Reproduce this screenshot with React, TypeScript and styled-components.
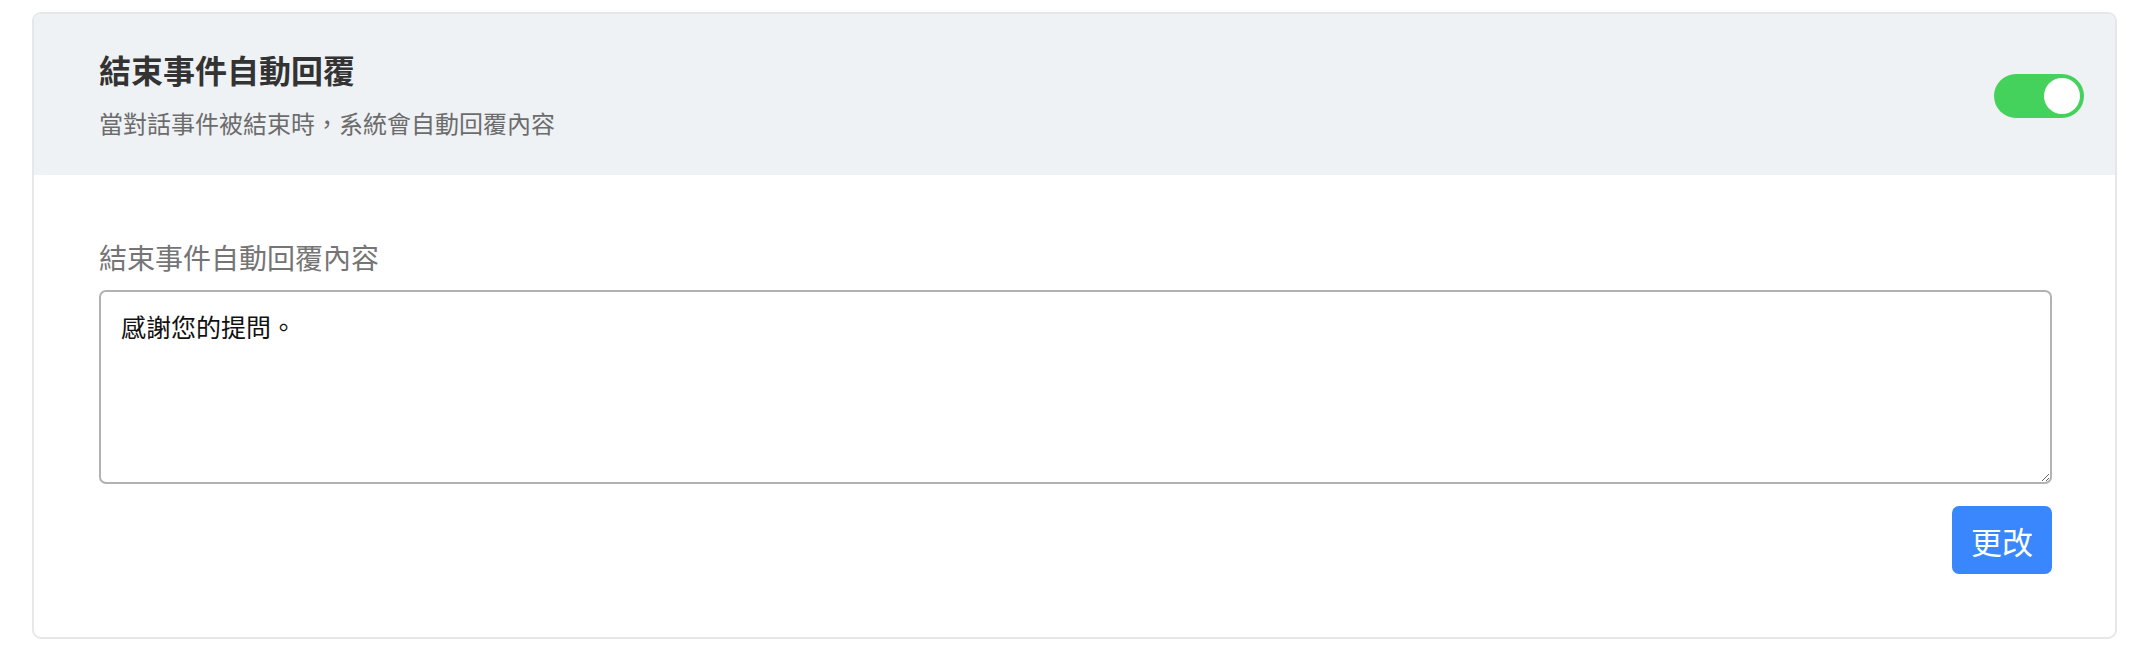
import React, { useState } from "react";
import styled, { createGlobalStyle } from "styled-components";

const GlobalStyle = createGlobalStyle`
  html, body {
    margin: 0;
    padding: 0;
    background: #ffffff;
    font-family: "Noto Sans CJK TC", "Noto Sans", sans-serif;
  }
  * { box-sizing: border-box; }
`;

const Page = styled.div`
  padding: 12px 33px 19px 32px;
`;

const Card = styled.section`
  border: 2px solid #e6e7e9;
  border-radius: 9px;
  overflow: hidden;
  background: #ffffff;
`;

const Header = styled.header`
  display: flex;
  align-items: center;
  justify-content: space-between;
  background: #eff2f5;
  padding: 36px 31px 34px 65px;
`;

const HeaderText = styled.div`
  display: flex;
  flex-direction: column;
  gap: 16px;
`;

const Title = styled.h2`
  margin: 0;
  font-size: 32px;
  line-height: 39px;
  font-weight: 700;
  color: #333333;
`;

const Subtitle = styled.p`
  margin: 0;
  font-size: 24px;
  line-height: 36px;
  color: #6c6c6c;
`;

const Switch = styled.button<{ $on: boolean }>`
  display: flex;
  align-items: center;
  justify-content: ${(p) => (p.$on ? "flex-end" : "flex-start")};
  width: 90px;
  height: 44px;
  padding: 4px;
  border: none;
  border-radius: 22px;
  background: ${(p) => (p.$on ? "#44d15c" : "#d0d4d9")};
  cursor: pointer;
`;

const Knob = styled.span`
  display: block;
  width: 36px;
  height: 36px;
  border-radius: 50%;
  background: #ffffff;
`;

const Body = styled.div`
  display: flex;
  flex-direction: column;
  padding: 62px 63px 63px 65px;
`;

const Label = styled.label`
  font-size: 28px;
  line-height: 40px;
  color: #757575;
  margin-bottom: 13px;
`;

const TextArea = styled.textarea`
  display: block;
  width: 100%;
  height: 194px;
  padding: 14px 20px;
  border: 2px solid #b2b2b2;
  border-radius: 7px;
  font-family: "Noto Sans CJK TC", "Noto Sans", sans-serif;
  font-size: 25px;
  line-height: 40px;
  color: #111111;
  resize: vertical;
  outline: none;
`;

const Actions = styled.div`
  display: flex;
  justify-content: flex-end;
  margin-top: 22px;
`;

const PrimaryButton = styled.button`
  width: 100px;
  height: 68px;
  border: none;
  border-radius: 7px;
  background: #3a87fd;
  color: #ffffff;
  font-family: "Noto Sans CJK TC", "Noto Sans", sans-serif;
  font-size: 31px;
  line-height: 1;
  cursor: pointer;
`;

export default function App() {
  const [on, setOn] = useState(true);
  const [text, setText] = useState("感謝您的提問。");
  return (
    <>
      <GlobalStyle />
      <Page>
        <Card>
          <Header>
            <HeaderText>
              <Title>結束事件自動回覆</Title>
              <Subtitle>當對話事件被結束時，系統會自動回覆內容</Subtitle>
            </HeaderText>
            <Switch $on={on} onClick={() => setOn(!on)} aria-label="toggle">
              <Knob />
            </Switch>
          </Header>
          <Body>
            <Label htmlFor="reply">結束事件自動回覆內容</Label>
            <TextArea id="reply" value={text} onChange={(e) => setText(e.target.value)} />
            <Actions>
              <PrimaryButton>更改</PrimaryButton>
            </Actions>
          </Body>
        </Card>
      </Page>
    </>
  );
}
